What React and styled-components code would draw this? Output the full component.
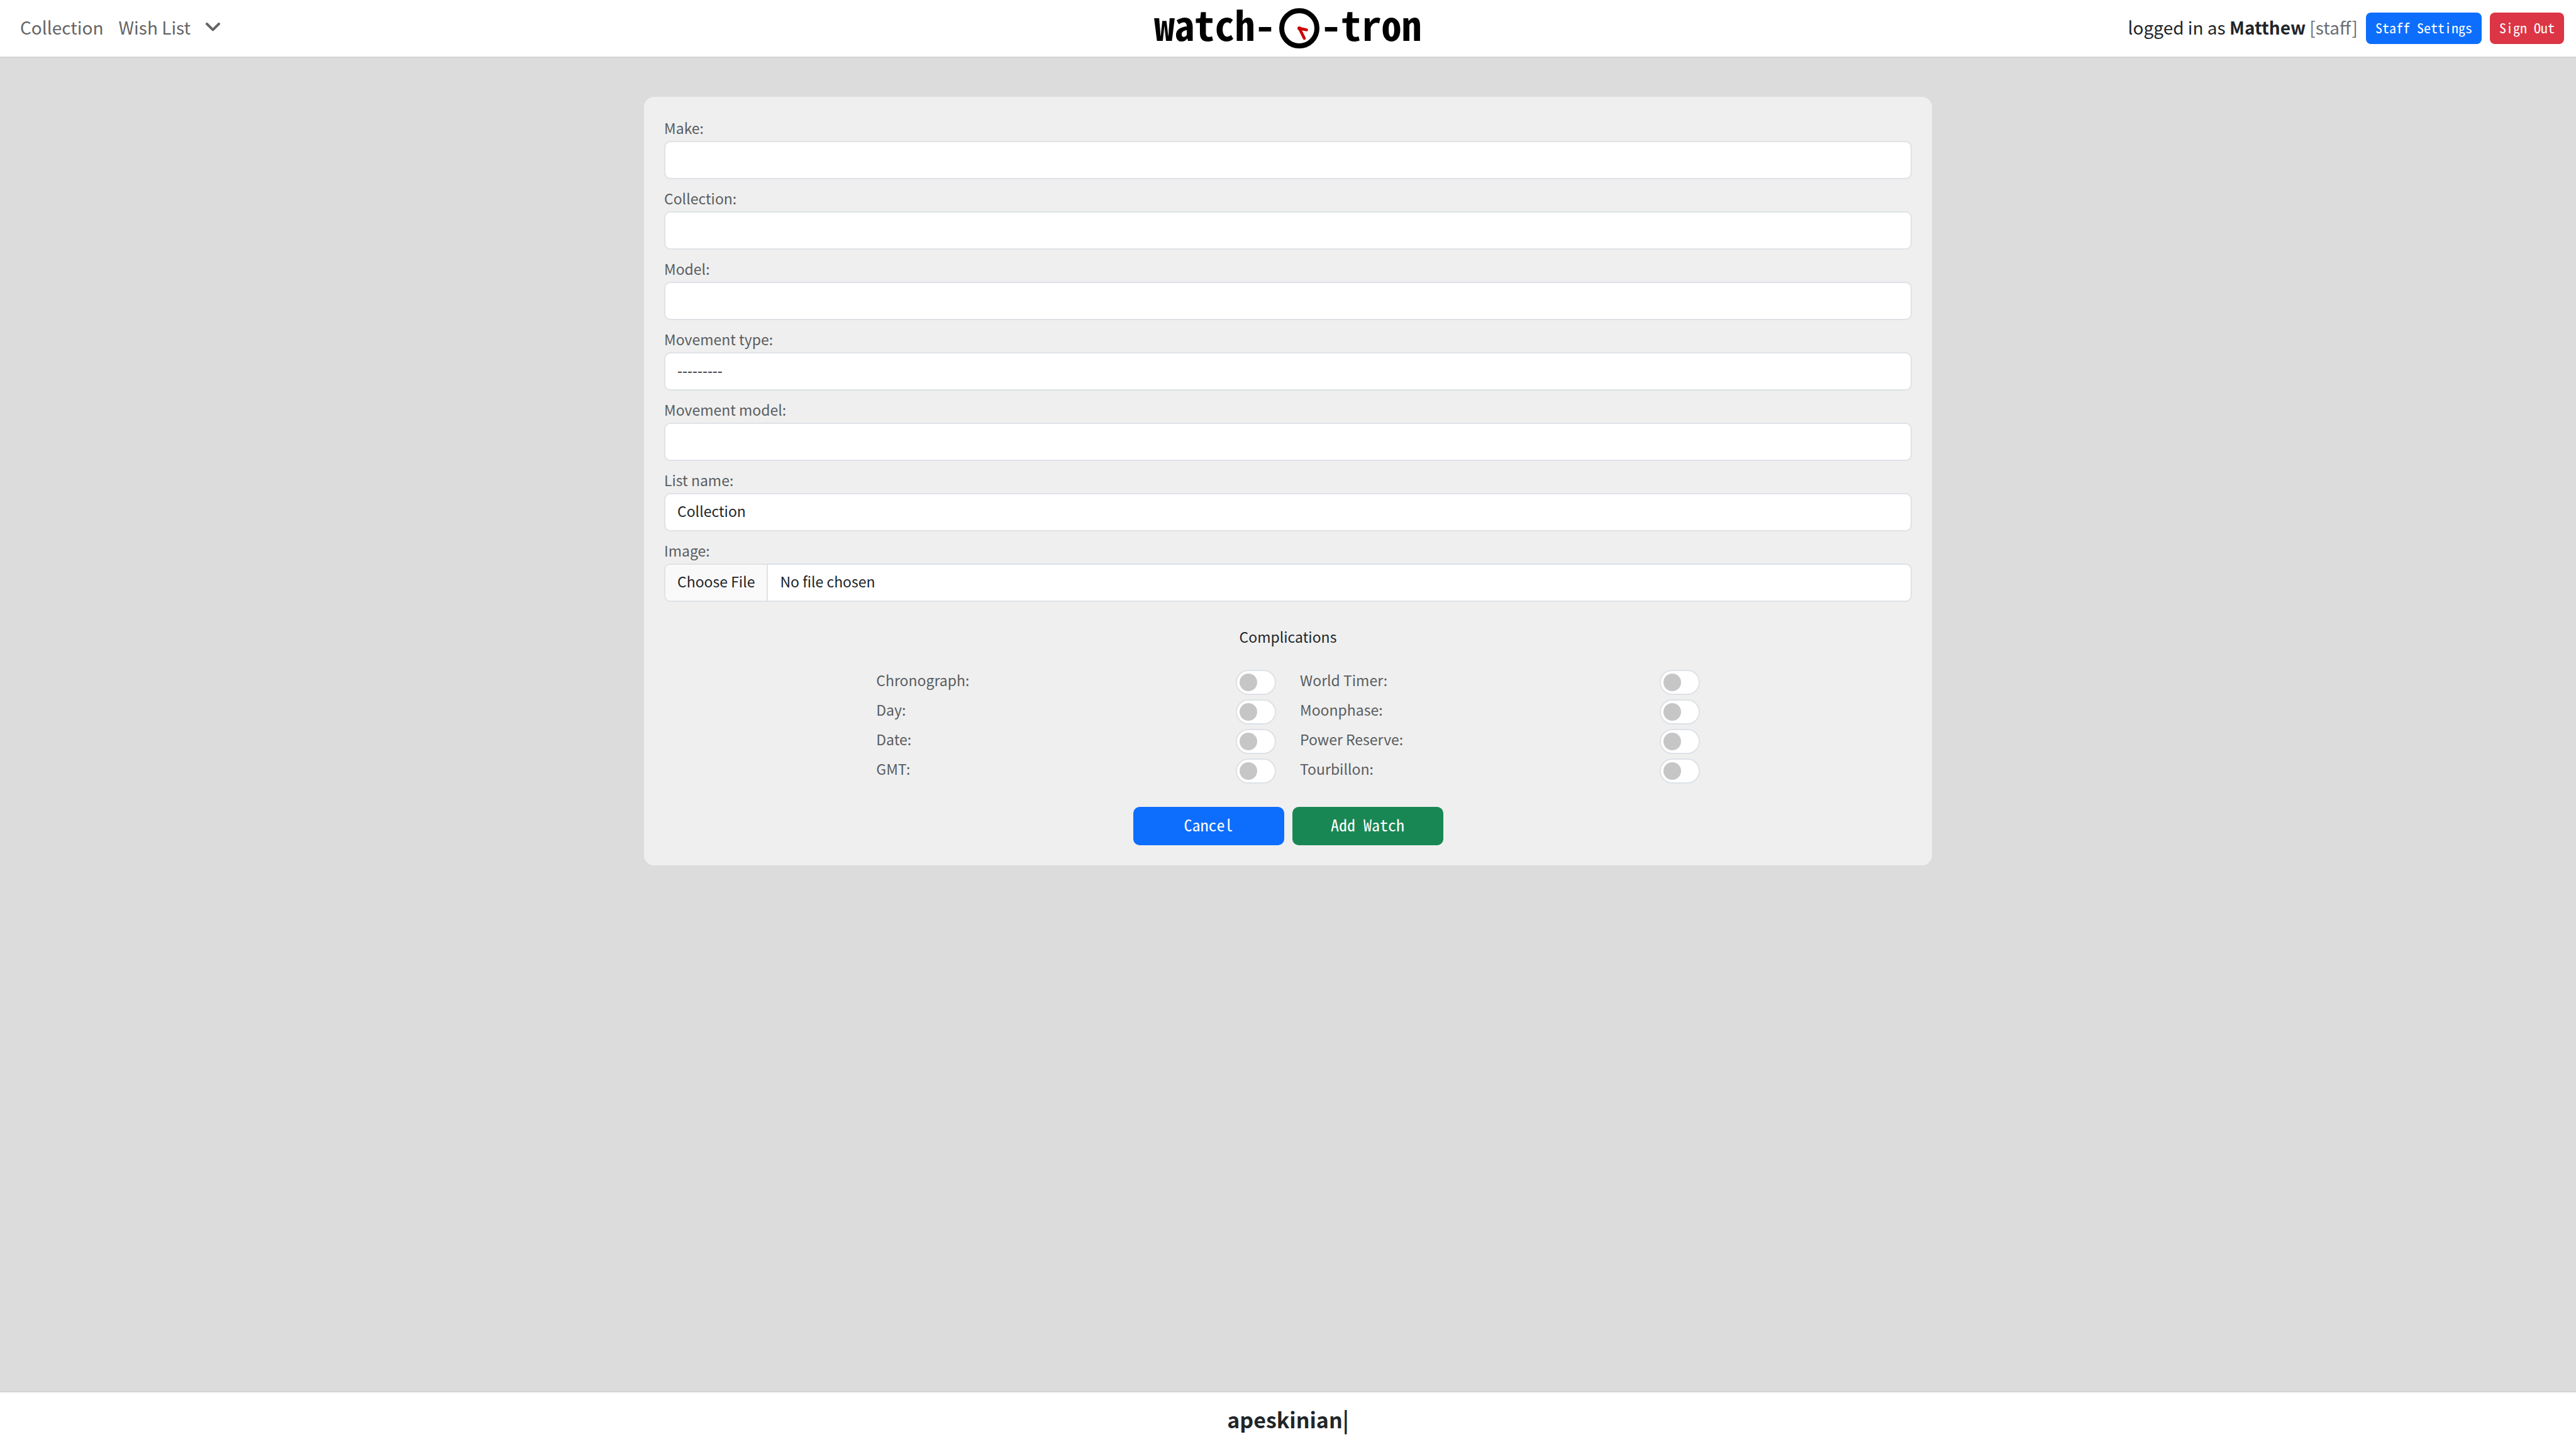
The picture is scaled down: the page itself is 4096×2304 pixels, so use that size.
import React from "react";
import styled, { createGlobalStyle } from "styled-components";

const GlobalStyle = createGlobalStyle`
  *, *::before, *::after { box-sizing: border-box; }
  body {
    margin: 0;
    background: #dcdcdc;
    color: #212529;
    font-family: "Noto Sans CJK JP", "Noto Sans", sans-serif;
    font-size: 23px;
    line-height: 34px;
  }
`;

const Page = styled.div`
  min-height: 100vh;
  display: flex;
  flex-direction: column;
`;

const Header = styled.header`
  display: grid;
  grid-template-columns: 1fr auto 1fr;
  align-items: center;
  height: 92px;
  border-bottom: 2px solid #d3d3d3;
  background: #fff;
  font-size: 28px;
`;

const Nav = styled.nav`
  display: flex;
  align-items: center;
  gap: 24px;
  padding: 0 0 4px 32px;
`;

const NavLink = styled.a`
  color: #656565;
  text-decoration: none;
`;

const MenuButton = styled.button`
  display: flex;
  padding: 0;
  border: 0;
  background: none;
  color: #656565;
  cursor: pointer;
`;

const Brand = styled.a`
  display: flex;
  align-items: center;
  color: #000;
  font-size: 64px;
  font-weight: 700;
  line-height: 64px;
  font-feature-settings: "hwid";
  text-decoration: none;
`;

const BrandWord = styled.span`
  padding-bottom: 16px;
`;

const Dial = styled.svg`
  display: block;
  width: 64px;
  height: 64px;
  margin: 0 3px 0 6px;
`;

const Account = styled.div`
  display: flex;
  align-items: center;
  justify-content: flex-end;
  gap: 13px;
  padding-right: 19px;
`;

const Status = styled.span`
  padding-bottom: 4px;
`;

const Role = styled.span`
  color: #6b6d70;
`;

const tones = { primary: "#0d6efd", danger: "#dc3545", success: "#198754" };

const Button = styled.button`
  padding: ${(p) => (p.$large ? "0 15px 6px" : "0 15px 4px")};
  height: ${(p) => (p.$large ? 61 : 50)}px;
  width: ${(p) => (p.$large ? "240px" : "auto")};
  border: 0;
  border-radius: ${(p) => (p.$large ? 10 : 8)}px;
  background: ${(p) => tones[p.$tone]};
  color: #fff;
  font-family: inherit;
  font-size: ${(p) => (p.$large ? 26 : 22)}px;
  font-weight: 400;
  font-feature-settings: "hwid";
  font-variant-ligatures: none;
  cursor: pointer;
`;

const Main = styled.main`
  flex: 1;
  padding: 62px 0;
`;

const Card = styled.form`
  width: 50%;
  margin: 0 auto;
  padding: 32px;
  border-radius: 16px;
  background: #efefef;
`;

const Fields = styled.div`
  display: grid;
  gap: 13px;
`;

const Field = styled.div`
  display: grid;
  gap: 4px;
`;

const Label = styled.label`
  color: #5a5d60;
`;

const Control = styled.input`
  display: block;
  width: 100%;
  height: 61px;
  padding: 0 19px 6px;
  border: 2px solid #dee2e6;
  border-radius: 10px;
  background: #fff;
  color: #212529;
  font: inherit;
  appearance: none;

  &[type="file"] {
    padding: 0 19px;
  }

  &::file-selector-button {
    height: 57px;
    margin: 0 19px 0 -19px;
    padding: 0 19px 6px;
    border: 0;
    border-right: 2px solid #dee2e6;
    background: #f9f9fa;
    color: #212529;
    font: inherit;
  }
`;

const Complications = styled.fieldset`
  width: 66%;
  margin: 38px auto 37px;
  padding: 0;
  border: 0;
`;

const Legend = styled.legend`
  width: 100%;
  padding: 0;
  margin-bottom: 36px;
  text-align: center;
`;

const Switches = styled.div`
  display: grid;
  grid-template-columns: 1fr 1fr;
  grid-template-rows: repeat(4, 40px);
  grid-auto-flow: column;
  gap: 7px 38px;
`;

const SwitchRow = styled.div`
  display: flex;
  justify-content: space-between;
  align-items: flex-start;
  line-height: 32px;
`;

const Toggle = styled.input`
  appearance: none;
  display: flex;
  align-items: center;
  width: 64px;
  height: 40px;
  margin: 0;
  padding: 0 4px;
  border: 2px solid #dee2e6;
  border-radius: 20px;
  background: #fff;

  &::before {
    content: "";
    width: 28px;
    height: 28px;
    border-radius: 50%;
    background: #c6c6c6;
  }

  &:checked {
    justify-content: flex-end;
  }
`;

const Actions = styled.div`
  display: flex;
  justify-content: center;
  gap: 13px;
`;

const Footer = styled.footer`
  display: flex;
  justify-content: center;
  align-items: center;
  height: 92px;
  padding-bottom: 4px;
  border-top: 2px solid #d3d3d3;
  background: #fff;
  font-size: 34px;
  font-weight: 700;
`;

const fields = [
  { id: "make", label: "Make:" },
  { id: "collection", label: "Collection:" },
  { id: "model", label: "Model:" },
  { id: "movement-type", label: "Movement type:", options: ["---------"] },
  { id: "movement-model", label: "Movement model:" },
  { id: "list-name", label: "List name:", options: ["Collection", "Wish List"] },
  { id: "image", label: "Image:", type: "file" },
];

const complications = [
  "Chronograph",
  "Day",
  "Date",
  "GMT",
  "World Timer",
  "Moonphase",
  "Power Reserve",
  "Tourbillon",
];

function FormField({ id, label, options, type = "text" }) {
  return (
    <Field>
      <Label htmlFor={id}>{label}</Label>
      {options ? (
        <Control as="select" id={id} name={id}>
          {options.map((option) => (
            <option key={option}>{option}</option>
          ))}
        </Control>
      ) : (
        <Control id={id} name={id} type={type} />
      )}
    </Field>
  );
}

function ComplicationSwitch({ name }) {
  const id = name.toLowerCase().replace(" ", "-");
  return (
    <SwitchRow>
      <Label htmlFor={id}>{name}:</Label>
      <Toggle type="checkbox" role="switch" id={id} name={id} />
    </SwitchRow>
  );
}

export default function App() {
  return (
    <Page>
      <GlobalStyle />
      <Header>
        <Nav>
          <NavLink href="#collection">Collection</NavLink>
          <NavLink href="#wish-list">Wish List</NavLink>
          <MenuButton type="button" aria-label="More lists">
            <svg width="23" height="14" viewBox="0 0 23 14" fill="none">
              <path
                d="M2 2 L11.5 11.4 L21 2"
                stroke="currentColor"
                strokeWidth="4"
                strokeLinecap="round"
                strokeLinejoin="round"
              />
            </svg>
          </MenuButton>
        </Nav>
        <Brand href="#home">
          <BrandWord>watch-</BrandWord>
          <Dial viewBox="0 0 64 64">
            <circle cx="32" cy="32" r="28" fill="none" stroke="#000" strokeWidth="8" />
            <circle cx="32" cy="32" r="3" fill="#c00" />
            <path d="M32 32 L43.5 34.5 M32 32 L40 48" stroke="#c00" strokeWidth="4.6" strokeLinecap="round" />
          </Dial>
          <BrandWord>-tron</BrandWord>
        </Brand>
        <Account>
          <Status>
            logged in as <b>Matthew</b> <Role>[staff]</Role>
          </Status>
          <Button type="button" $tone="primary">Staff Settings</Button>
          <Button type="button" $tone="danger">Sign Out</Button>
        </Account>
      </Header>
      <Main>
        <Card onSubmit={(event) => event.preventDefault()}>
          <Fields>
            {fields.map((field) => (
              <FormField key={field.id} {...field} />
            ))}
          </Fields>
          <Complications>
            <Legend>Complications</Legend>
            <Switches>
              {complications.map((name) => (
                <ComplicationSwitch key={name} name={name} />
              ))}
            </Switches>
          </Complications>
          <Actions>
            <Button type="button" $large $tone="primary">Cancel</Button>
            <Button type="submit" $large $tone="success">Add Watch</Button>
          </Actions>
        </Card>
      </Main>
      <Footer>apeskinian|</Footer>
    </Page>
  );
}
